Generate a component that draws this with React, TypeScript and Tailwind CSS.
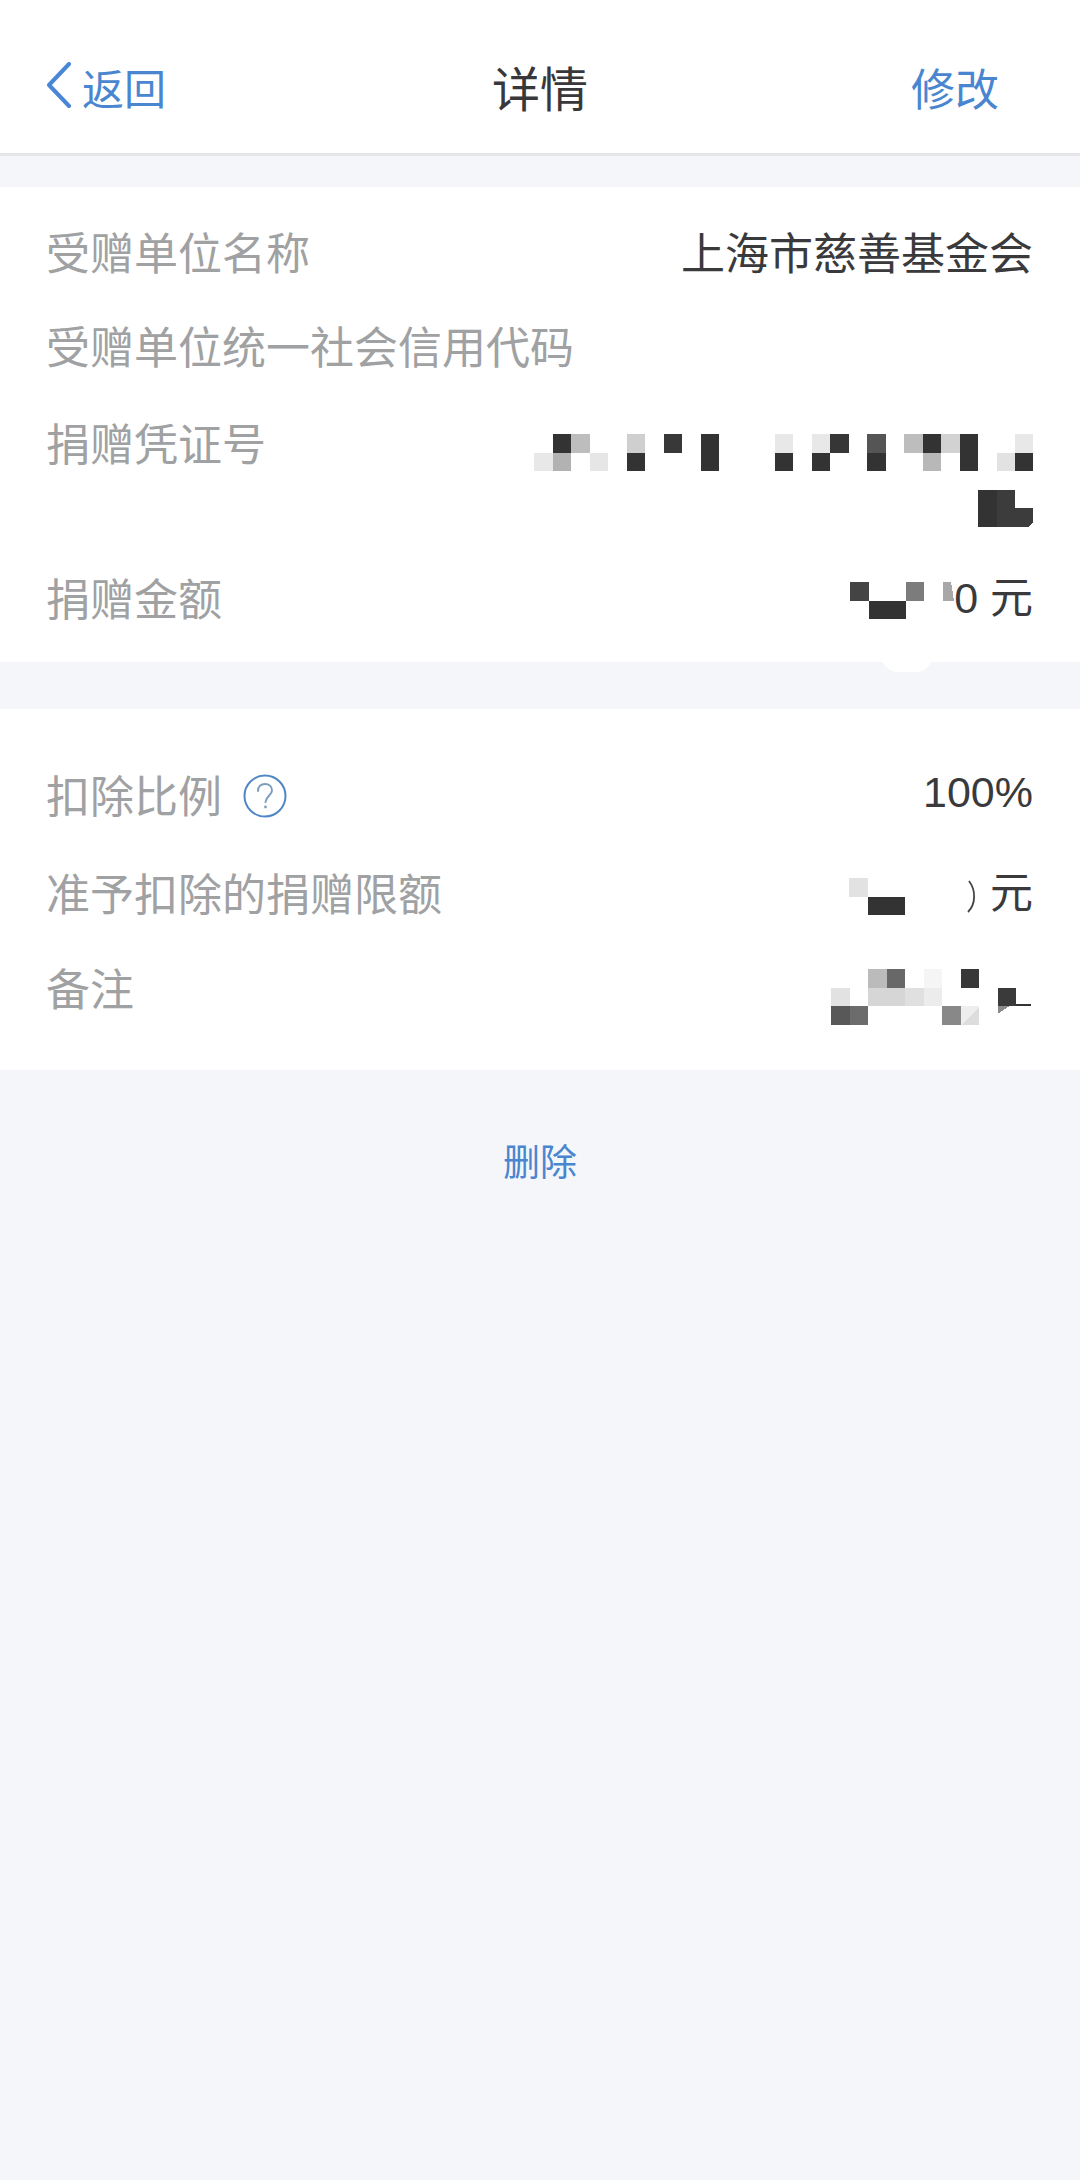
import React from "react";

const font = { fontFamily: '"Liberation Sans", "Noto Sans CJK SC", sans-serif' };

type Cell = [number, number, string];

function Mosaic({ w, h, cw = 18.5, ch = 18.6, cells, children, className }: { w: number; h: number; cw?: number; ch?: number; cells: Cell[]; children?: React.ReactNode; className?: string }) {
  return (
    <svg width={w} height={h} viewBox={`0 0 ${w} ${h}`} className={className} shapeRendering="crispEdges">
      {cells.map(([c, r, f], i) => (
        <rect key={i} x={c * cw} y={r * ch} width={cw} height={ch} fill={f} />
      ))}
      {children}
    </svg>
  );
}

const D = "#333333";
const certCells: Cell[] = [
  [1, 0, D], [2, 0, "#bdbdbd"], [5, 0, "#cfcfcf"], [7, 0, "#383838"], [9, 0, D], [13, 0, "#e8e8e8"], [15, 0, "#e8e8e8"], [16, 0, "#363636"], [18, 0, "#555555"], [20, 0, "#bdbdbd"], [21, 0, D], [22, 0, "#d2d2d2"], [23, 0, D], [26, 0, "#e8e8e8"],
  [0, 1, "#e8e8e8"], [1, 1, "#b2b2b2"], [3, 1, "#e6e6e6"], [5, 1, D], [9, 1, D], [13, 1, D], [15, 1, D], [18, 1, D], [21, 1, "#b8b8b8"], [23, 1, D], [25, 1, "#e2e2e2"], [26, 1, D],
  [24, 3, D], [25, 3, "#3c3c3c"], [24, 4, D], [25, 4, "#3c3c3c"],
];
const amountCells: Cell[] = [[0, 0, "#444444"], [3, 0, "#7c7c7c"], [1, 1, D], [2, 1, D]];
const limitCells: Cell[] = [[0, 0, "#e2e2e2"], [1, 1, D], [2, 1, D]];
const noteCells: Cell[] = [
  [2, 0, "#bbbbbb"], [3, 0, "#686868"], [5, 0, "#f5f5f5"], [7, 0, "#383838"],
  [0, 1, "#e2e2e2"], [2, 1, "#d6d6d6"], [3, 1, "#d6d6d6"], [4, 1, "#e0e0e0"], [5, 1, "#ececec"], [9, 1, "#3a3a3a"],
  [0, 2, "#585858"], [1, 2, "#6c6c6c"], [6, 2, "#888888"], [7, 2, "#dddddd"],
];

function Label({ children }: { children: React.ReactNode }) {
  return <span className="text-[44px] leading-[62px] text-[#a0a1a3]">{children}</span>;
}

export default function App() {
  return (
    <div className="relative min-h-[2180px] w-[1080px] overflow-hidden bg-[#f4f6fa]" style={font}>
      <header className="grid h-[156px] grid-cols-3 items-center border-b-[3px] border-[#e6e6e8] bg-white pb-[2px] pt-[30px]">
        <div className="flex items-start pl-[45px]">
          <svg width="28" height="46" viewBox="0 0 28 46" fill="none">
            <path d="M24 2 L4 23 L24 44" stroke="#4a86d6" strokeWidth="4" strokeLinecap="round" strokeLinejoin="round" />
          </svg>
          <span className="ml-[9px] text-[42px] leading-[58px] text-[#4a86d0]">返回</span>
        </div>
        <h1 className="text-center text-[48px] font-normal leading-[70px] text-[#38383a]">详情</h1>
        <div className="pr-[81px] text-right text-[44px] leading-[66px] text-[#4a86d0]">修改</div>
      </header>

      <section className="mt-[31px] bg-white pb-[36px] pl-[46px] pr-[47px] pt-[37px]">
        <div className="flex h-[94px] items-start justify-between">
          <Label>受赠单位名称</Label>
          <span className="text-[44px] leading-[62px] text-[#3a3a3c]">上海市慈善基金会</span>
        </div>
        <div className="h-[97px]">
          <Label>受赠单位统一社会信用代码</Label>
        </div>
        <div className="flex h-[155px] items-start justify-between">
          <Label>捐赠凭证号</Label>
          <Mosaic w={499} h={93} cells={certCells} className="mt-[19px]">
            <path d="M481 74.4 H499 V88 L494 93 H481 Z" fill="#3c3c3c" />
          </Mosaic>
        </div>
        <div className="flex h-[56px] items-start justify-between">
          <Label>捐赠金额</Label>
          <div className="flex items-start">
            <Mosaic w={104} h={38} cells={amountCells} className="mt-[12px]">
              <path d="M92.5 0 H101 L104 18.6 H92.5 Z" fill="#a8a8a8" />
            </Mosaic>
            <span className="text-[43px] leading-[56px] text-[#3a3a3c]">0 元</span>
          </div>
        </div>
      </section>

      <div className="absolute left-[881px] top-[655px] h-[17px] w-[52px] rounded-b-full bg-white" />

      <section className="mt-[47px] bg-white pb-[54px] pl-[46px] pr-[47px] pt-[58px]">
        <div className="flex h-[98px] items-start justify-between">
          <div className="flex items-start">
            <Label>扣除比例</Label>
            <svg width="44" height="44" viewBox="0 0 44 44" fill="none" className="ml-[21px] mt-[7px]">
              <circle cx="22" cy="22" r="20.5" stroke="#4f86c4" strokeWidth="2" />
              <path d="M15 17 C15 12.5 18 10 22 10 C26 10 29 12.5 29 16.5 C29 21 23 22 22.5 28" stroke="#7e9cc0" strokeWidth="2" strokeLinecap="round" />
              <circle cx="22.5" cy="33" r="1.4" fill="#7e9cc0" />
            </svg>
          </div>
          <span className="text-[43px] leading-[50px] text-[#3a3a3c]">100%</span>
        </div>
        <div className="flex h-[95px] items-start justify-between">
          <Label>准予扣除的捐赠限额</Label>
          <div className="flex items-start">
            <Mosaic w={141} h={50} cells={limitCells} className="mt-[13px]">
              <path d="M120 3 C127 12 127 26 119 34" stroke="#444" strokeWidth="1.8" fill="none" shapeRendering="auto" />
            </Mosaic>
            <span className="text-[43px] leading-[56px] text-[#3a3a3c]">元</span>
          </div>
        </div>
        <div className="flex h-[56px] items-start justify-between">
          <Label>备注</Label>
          <Mosaic w={202} h={56} cells={noteCells} className="mt-[9px]">
            <path d="M129.5 37.2 H148 V39 L131 55.8 H129.5 Z" fill="#eeeeee" />
            <path d="M166.5 37.2 H178 L166.5 45 Z" fill="#8a8a8a" />
            <rect x="166.5" y="18.6" width="18.5" height="18.6" fill="#3a3a3a" />
            <rect x="185" y="34.5" width="15" height="2" fill="#333333" />
          </Mosaic>
        </div>
      </section>

      <div className="mt-[62px] text-center text-[37px] leading-[64px] text-[#4a86d0]">删除</div>
    </div>
  );
}
